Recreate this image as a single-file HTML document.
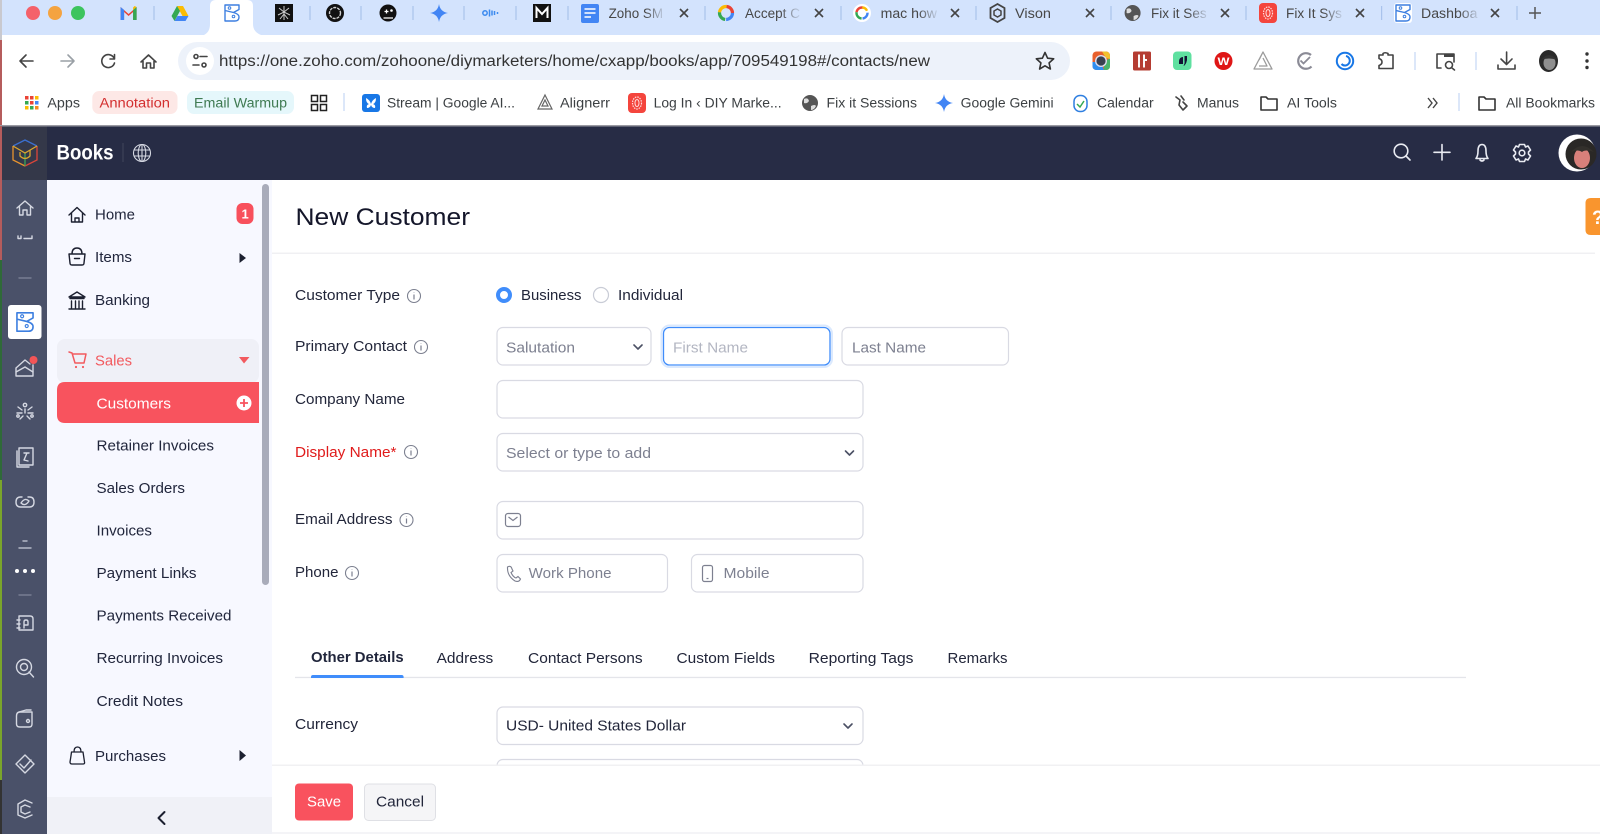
<!DOCTYPE html>
<html lang="en"><head><meta charset="utf-8"><title>New Customer</title>
<style>
html,body{margin:0;padding:0;background:#fff;width:1600px;height:834px;overflow:hidden}
svg{display:block;position:absolute;left:0;top:0}
text{font-family:"Liberation Sans",sans-serif;font-size:15px;fill:#21263c}
.t{font-size:13.5px;fill:#474747}.b{font-size:13.5px;fill:#3c4043}
.s{font-size:15px;fill:#21263c}.f{font-size:14.5px;fill:#22263a}.p{font-size:15px;fill:#7d8090}
.ic{fill:none;stroke:#444;stroke-width:1.6;stroke-linecap:round;stroke-linejoin:round}
.ra{fill:none;stroke:#d5d8e2;stroke-width:1.4;stroke-linecap:round;stroke-linejoin:round}
.sb{fill:none;stroke:#1c2030;stroke-width:1.4;stroke-linecap:round;stroke-linejoin:round}
.hd{fill:none;stroke:#e9ebf2;stroke-width:1.6;stroke-linecap:round;stroke-linejoin:round}
.bx{fill:#fff;stroke:#d9dae3;stroke-width:1.2}
</style></head><body>
<svg width="1600" height="834" viewBox="0 0 1600 834" xmlns="http://www.w3.org/2000/svg">
<defs>
<g id="i"><circle r="6.5" fill="none" stroke="#7c8090" stroke-width="1.1"/><path d="M0-1.5V3.5M0-3.6v.4" stroke="#7c8090" stroke-width="1.2" fill="none"/></g>
<g id="x"><path d="M-4-4L4 4M4-4L-4 4" stroke="#444" stroke-width="1.6" fill="none"/></g>
<path id="ch" d="M-4-2L0 2L4-2" fill="none" stroke="#4b5064" stroke-width="1.6" stroke-linecap="round" stroke-linejoin="round"/>
<linearGradient id="fd" x1="0" x2="1"><stop offset="0" stop-color="#d3e3fd" stop-opacity="0"/><stop offset="1" stop-color="#d3e3fd"/></linearGradient>
<g id="bk"><rect x="-9" y="-10" width="18" height="20" rx="3" fill="#fff"/><path d="M-7-8H7V-3.500L1.500-.5Q7 1 7 4Q7 8 3 8H-7ZM-7-2.500L1.500-.5" fill="none" stroke="#3d7fe0" stroke-width="1.400" stroke-linejoin="round"/><circle cx="-2.500" cy="-5" r="1.300" fill="none" stroke="#3d7fe0"/><circle cx="1.500" cy="3.500" r="1.300" fill="none" stroke="#3d7fe0"/></g>
<g id="gl"><circle r="8" fill="#555"/><path d="M-6-4Q-2-6-1-2Q-3 1-6 0ZM1 3Q5 1 6 3Q4 7 1 7Z" fill="#ddd"/></g>
<g id="rd"><rect x="-9" y="-10" width="18" height="20" rx="4" fill="#f4453d"/><ellipse rx="4.500" ry="6" fill="none" stroke="#fdd" stroke-width="1.200" stroke-dasharray="1.500 1"/><ellipse rx="2" ry="3.500" fill="none" stroke="#fdd" stroke-width="1"/></g>
<path id="sp" d="M0-9Q1.200-1.200 9 0Q1.200 1.200 0 9Q-1.200 1.200-9 0Q-1.200-1.200 0-9Z" fill="#4285f4"/>
<path id="fo" d="M-8-6H-3L-1-4H8V7H-8Z" fill="none" stroke="#333" stroke-width="1.600" stroke-linejoin="round"/>
</defs>

<!-- chrome -->
<rect width="1600" height="126" fill="#fff"/>
<rect width="1600" height="35" fill="#d3e3fd"/>
<rect x="0" y="0" width="2" height="60" fill="#c9c9cf"/>
<rect x="0" y="40" width="2" height="86" fill="#b55c5c"/>
<path d="M204 35Q210 32 210 24V6Q210 0 216 0H247Q253 0 253 6V24Q253 32 261 35Z" fill="#fff"/>
<circle cx="33" cy="13" r="7" fill="#f4616a"/><circle cx="55" cy="13" r="7" fill="#f4a340"/><circle cx="78" cy="13" r="7" fill="#3cc45e"/>
<!-- pinned tab icons -->
<g transform="translate(128.600 13)"><path d="M-8 7V-6L0 1L8-6V7H4.500V-1L0 3L-4.500-1V7Z" fill="#ea4335"/><path d="M-8 7V-6L-4.500-3V7Z" fill="#4285f4"/><path d="M8 7V-6L4.500-3V7Z" fill="#34a853"/><path d="M4.500-3L8-6L6-7L4.500-5.500Z" fill="#fbbc04"/></g>
<path d="M154 6V20M310 6V20M361 6V20M413 6V20M464 6V20M516 6V20M568 6V20M705 6V20M841 6V20M976 6V20M1111 6V20M1246 6V20M1381.600 6V20M1517 6V20" stroke="#a9c3ec" stroke-width="1.200"/>
<g transform="translate(180 13)"><path d="M-3-7H3L8.500 3H2.500Z" fill="#fbbc04"/><path d="M-3-7L-8.500 3L-5.500 8L0-2Z" fill="#34a853"/><path d="M-5.500 8H5.500L8.500 3H-2.500Z" fill="#4285f4"/></g>
<use href="#bk" x="232" y="13"/>
<rect x="275" y="4" width="18" height="18" fill="#111"/><path d="M279 8L284 12L289 8M278 15L284 12L290 15M284 6V20M280 19L284 14L288 19" stroke="#ccc" stroke-width="1" fill="none"/>
<circle cx="335" cy="13" r="9" fill="#111"/><circle cx="335" cy="13" r="5.500" fill="none" stroke="#d0d0d0" stroke-width="1.400" stroke-dasharray="3 1"/>
<circle cx="388" cy="13" r="8.500" fill="#111"/><circle cx="391.500" cy="10.500" r="1.300" fill="#fff"/><path d="M383.500 18H393M384.500 11.500h4M386.500 9.500v4" stroke="#fff" stroke-width="1.300"/>
<use href="#sp" transform="translate(439 13)"/>
<g transform="translate(491 13)" stroke="#3d8bef" stroke-width="1.500" fill="none"><circle cx="-6" r="2.200"/><path d="M-1.500-3.500V3.500M1-2.500V2.500M3.500-2V2M6.500-1V1"/></g>
<rect x="533" y="4" width="18" height="18" fill="#111"/><path d="M536.500 18V8L542 14L547.500 8V18" fill="none" stroke="#fff" stroke-width="2"/>
<rect x="581" y="4" width="18" height="19" rx="2" fill="#4285f4"/><path d="M584.500 9H595.500M584.500 13H595.500M584.500 17H591" stroke="#fff" stroke-width="1.600"/>
<text class="t" x="608.600" y="18" textLength="54.400" lengthAdjust="spacingAndGlyphs">Zoho SM</text><rect x="645" y="2" width="22" height="24" fill="url(#fd)"/><use href="#x" x="684" y="13"/>
<g transform="translate(726 13)" fill="none" stroke-width="3.200"><circle r="6.500" stroke="#4285f4" stroke-dasharray="10 31"/><circle r="6.500" stroke="#ea4335" stroke-dasharray="10 31" stroke-dashoffset="10"/><circle r="6.500" stroke="#fbbc04" stroke-dasharray="10 31" stroke-dashoffset="20"/><circle r="6.500" stroke="#34a853" stroke-dasharray="10 31" stroke-dashoffset="30"/></g>
<text class="t" x="745" y="18" textLength="55" lengthAdjust="spacingAndGlyphs">Accept C</text><rect x="780" y="2" width="22" height="24" fill="url(#fd)"/><use href="#x" x="819" y="13"/>
<circle cx="862" cy="13" r="9" fill="#fff"/><g transform="translate(862 13)" fill="none" stroke-width="2.400"><circle r="5.500" stroke="#4285f4" stroke-dasharray="9 26" stroke-dashoffset="1"/><circle r="5.500" stroke="#ea4335" stroke-dasharray="9 26" stroke-dashoffset="17"/><circle r="5.500" stroke="#fbbc04" stroke-dasharray="6 29" stroke-dashoffset="9"/><circle r="5.500" stroke="#34a853" stroke-dasharray="9 26" stroke-dashoffset="26"/></g>
<text class="t" x="880.600" y="18" textLength="56.400" lengthAdjust="spacingAndGlyphs">mac how</text><rect x="918" y="2" width="22" height="24" fill="url(#fd)"/><use href="#x" x="955" y="13"/>
<g transform="translate(997.500 13)" fill="none" stroke="#444" stroke-width="1.800"><path d="M0-9L7-5V5L0 9L-7 5V-5Z"/><path d="M0-4L3.500-2V2L0 4L-3.500 2V-2Z" stroke-width="1.500"/></g>
<text class="t" x="1015" y="18" textLength="36" lengthAdjust="spacingAndGlyphs">Vison</text><use href="#x" x="1090" y="13"/>
<use href="#gl" x="1132.600" y="13"/><text class="t" x="1151" y="18" textLength="55.600" lengthAdjust="spacingAndGlyphs">Fix it Ses</text><rect x="1188" y="2" width="22" height="24" fill="url(#fd)"/><use href="#x" x="1225" y="13"/>
<use href="#rd" x="1268" y="13"/><text class="t" x="1286" y="18" textLength="56" lengthAdjust="spacingAndGlyphs">Fix It Sys</text><rect x="1323" y="2" width="22" height="24" fill="url(#fd)"/><use href="#x" x="1360" y="13"/>
<use href="#bk" x="1403" y="13"/><text class="t" x="1421" y="18" textLength="56.500" lengthAdjust="spacingAndGlyphs">Dashboa</text><rect x="1459" y="2" width="22" height="24" fill="url(#fd)"/><use href="#x" x="1495" y="13"/>
<path d="M1529 13H1541M1535 7V19" stroke="#555" stroke-width="1.500"/>

<!-- toolbar -->
<g class="ic"><path d="M33 61H20M26 55L20 61L26 67"/><path d="M61 61H74M68 55L74 61L68 67" stroke="#9aa0a6"/><path d="M114 58A6.500 6.500 0 1 0 114.500 63M114.500 54.500V59H110"/><path d="M141 62L148.500 55L156 62M143 60V68H146.500V63H150.500V68H154V60"/></g>
<rect x="178" y="42" width="892" height="38" rx="19" fill="#edf2fa"/>
<circle cx="200" cy="61" r="14" fill="#fff"/>
<g class="ic" stroke-width="1.300"><circle cx="196" cy="56.500" r="2"/><path d="M200 56.500H207M193 65H199"/><circle cx="204" cy="65" r="2"/></g>
<text x="219" y="66" style="font-size:15.500px;fill:#333" textLength="711" lengthAdjust="spacingAndGlyphs">https://one.zoho.com/zohoone/diymarketers/home/cxapp/books/app/709549198#/contacts/new</text>
<path d="M1045 52.500L1047.600 58.200L1053.700 58.800L1049.100 62.900L1050.400 69L1045 65.800L1039.600 69L1040.900 62.900L1036.300 58.800L1042.400 58.200Z" fill="none" stroke="#333" stroke-width="1.600" stroke-linejoin="round"/>
<!-- extensions -->
<rect x="1092.500" y="51.500" width="17.500" height="18.500" rx="4" fill="#e8602c"/><path d="M1092.500 62V66Q1092.500 70 1097 70H1104L1101 62Z" fill="#2f8ef0"/><path d="M1104 70H1106Q1110 70 1110 66V58L1104 62Z" fill="#49b36a"/><path d="M1110 59V56Q1110 51.500 1105 51.500H1102L1106 58Z" fill="#f2c12e"/><circle cx="1101" cy="61" r="6" fill="#dde" /><circle cx="1101" cy="61" r="4.600" fill="#39404f"/>
<rect x="1133" y="51.500" width="18" height="19" rx="1.500" fill="#b53c32"/><path d="M1139 54.500V67.500M1144 54.500V67.500M1144 60H1147" stroke="#fff" stroke-width="1.900"/>
<rect x="1173" y="51.500" width="18.500" height="18.500" rx="4" fill="#5fe0a0"/><path d="M1179 62Q1179 57 1183 57V64H1179ZM1184.500 56H1187V60Q1186 65 1183.500 66Q1185 63 1184.500 61Z" fill="#113"/>
<circle cx="1223.500" cy="61" r="9" fill="#df1616"/><text x="1217.500" y="65" style="font-size:11px;font-weight:700;fill:#fff" textLength="12" lengthAdjust="spacingAndGlyphs">W</text>
<path d="M1263 52L1272 69H1254ZM1263 58L1267 66H1259M1263 52L1259 60" fill="none" stroke="#9b9b9b" stroke-width="1.300" stroke-linejoin="round"/>
<path d="M1311 55A7.800 7.800 0 1 0 1311.500 66.500" fill="none" stroke="#8b8b96" stroke-width="2.200"/><path d="M1300.500 60.500L1303.500 63.500L1310 57" fill="none" stroke="#8b8b96" stroke-width="1.800"/>
<circle cx="1345" cy="61" r="8.200" fill="none" stroke="#1877e6" stroke-width="2"/><path d="M1346 56A4.800 4.800 0 1 1 1341.500 64" fill="none" stroke="#1877e6" stroke-width="2"/>
<path class="ic" d="M1379 55H1383V53.500Q1385 52 1388 53.500V55H1393V68.500H1379V65.500Q1382 64.500 1382 62Q1382 59.500 1379 58.500Z"/>
<path d="M1415 52V70M1476 52V70" stroke="#c4d7f5" stroke-width="1.200"/>
<g class="ic"><path d="M1441 68H1437V54H1454V62"/><circle cx="1449" cy="65" r="3.500"/><path d="M1452 68L1454.500 70"/><rect x="1444" y="54" width="10" height="3" fill="#444" stroke="none"/></g>
<g class="ic" stroke="#333"><path d="M1506.600 52V64M1501 59L1506.600 64.500L1512 59M1498 65V69H1515V65"/></g>
<ellipse cx="1548.500" cy="61" rx="9.500" ry="11" fill="#2a2a2a"/><ellipse cx="1549.500" cy="63" rx="6" ry="7" fill="#8f8f8f"/><path d="M1541 60Q1549 50 1557 60Q1549 57 1541 60Z" fill="#333"/>
<circle cx="1587" cy="54" r="1.700" fill="#333"/><circle cx="1587" cy="61" r="1.700" fill="#333"/><circle cx="1587" cy="67.500" r="1.700" fill="#333"/>

<!-- bookmarks -->
<g><g fill="#ea4335"><rect x="25" y="96" width="3.500" height="3.500"/><rect x="30" y="96" width="3.500" height="3.500"/></g><rect x="35" y="96" width="3.500" height="3.500" fill="#fbbc04"/><rect x="25" y="101" width="3.500" height="3.500" fill="#34a853"/><rect x="30" y="101" width="3.500" height="3.500" fill="#ea4335"/><rect x="35" y="101" width="3.500" height="3.500" fill="#4285f4"/><rect x="25" y="106" width="3.500" height="3.500" fill="#fbbc04"/><rect x="30" y="106" width="3.500" height="3.500" fill="#34a853"/><rect x="35" y="106" width="3.500" height="3.500" fill="#f58a1f"/></g>
<text class="b" x="47.400" y="107.500" textLength="32.600" lengthAdjust="spacingAndGlyphs">Apps</text>
<rect x="92.300" y="91" width="85.200" height="23" rx="7" fill="#fde8e6"/><text x="99.500" y="107.500" style="font-size:13.500px;fill:#d32f2f" textLength="70.500" lengthAdjust="spacingAndGlyphs">Annotation</text>
<rect x="187" y="91" width="107" height="23" rx="7" fill="#e5f7fb"/><text x="194" y="107.500" style="font-size:13.500px;fill:#3f7a52" textLength="93" lengthAdjust="spacingAndGlyphs">Email Warmup</text>
<g fill="none" stroke="#222" stroke-width="1.500"><rect x="311.500" y="95.500" width="6" height="6"/><rect x="320.500" y="95.500" width="6" height="6"/><rect x="311.500" y="104.500" width="6" height="6"/><rect x="320.500" y="104.500" width="6" height="6"/></g>
<path d="M344 93V111" stroke="#c4d7f5" stroke-width="1.200"/>
<rect x="362" y="94" width="18" height="18" rx="3" fill="#1877e6"/><path d="M366 98Q370 100 371 104Q372 100 376 98Q376 103 373 104Q376 105 375 108Q372 108 371 105Q370 108 367 108Q366 105 369 104Q366 103 366 98Z" fill="#fff"/>
<text class="b" x="387" y="107.500" textLength="128" lengthAdjust="spacingAndGlyphs">Stream | Google AI...</text>
<path d="M545 95L552 109H538ZM545 100L548 106H542Z" fill="none" stroke="#666" stroke-width="1.200"/>
<text class="b" x="560" y="107.500" textLength="50" lengthAdjust="spacingAndGlyphs">Alignerr</text>
<use href="#rd" x="637" y="103"/><text class="b" x="653.600" y="107.500" textLength="128" lengthAdjust="spacingAndGlyphs">Log In ‹ DIY Marke...</text>
<use href="#gl" x="810" y="103"/><text class="b" x="826.500" y="107.500" textLength="90.500" lengthAdjust="spacingAndGlyphs">Fix it Sessions</text>
<use href="#sp" transform="translate(944 103)"/><text class="b" x="960.700" y="107.500" textLength="92.900" lengthAdjust="spacingAndGlyphs">Google Gemini</text>
<rect x="1074" y="95.500" width="13" height="16" rx="6" fill="none" stroke="#2f7fe0" stroke-width="1.500"/><path d="M1077 104L1080 107L1084 101" fill="none" stroke="#34a853" stroke-width="1.500"/>
<text class="b" x="1097" y="107.500" textLength="56.600" lengthAdjust="spacingAndGlyphs">Calendar</text>
<path class="ic" stroke-width="1.200" d="M1176 97L1180 100L1179 105L1183 110L1187 106L1183 102M1181 96L1184 100"/>
<text class="b" x="1197" y="107.500" textLength="42" lengthAdjust="spacingAndGlyphs">Manus</text>
<use href="#fo" x="1269" y="103"/><text class="b" x="1287" y="107.500" textLength="50" lengthAdjust="spacingAndGlyphs">AI Tools</text>
<path d="M1428 98L1432 103L1428 108M1433 98L1437 103L1433 108" fill="none" stroke="#444" stroke-width="1.400"/>
<path d="M1459 93V111" stroke="#c4d7f5" stroke-width="1.200"/>
<use href="#fo" x="1487" y="103"/><text class="b" x="1506" y="107.500" textLength="89" lengthAdjust="spacingAndGlyphs">All Bookmarks</text>
<rect y="125" width="1600" height="1.500" fill="#9a9aa2"/>

<!-- left desktop strip -->
<rect x="0" y="126" width="2" height="134" fill="#b55c5c"/><rect x="0" y="260" width="2" height="220" fill="#2f6a38"/><rect x="0" y="480" width="2" height="300" fill="#7aa52a"/><rect x="0" y="780" width="2" height="54" fill="#333"/>

<!-- app header -->
<rect x="47" y="126.500" width="1553" height="53.500" fill="#272c45"/>
<rect x="2" y="126.500" width="45" height="53.500" fill="#343849"/>
<g fill="none" stroke-width="1.300"><path d="M13 146L25 140L37 146" stroke="#3b6fd0"/><path d="M13 146V160L25 166" stroke="#e8932e"/><path d="M37 146V160L25 166" stroke="#d9453a"/><path d="M25 166V153" stroke="#3aa657"/><path d="M13 146L25 153L37 146" stroke="#d9a62e"/><path d="M20 152V156Q25 161 30 156V150" stroke="#d9a62e"/></g>
<text x="56.500" y="159.500" style="font-size:21px;font-weight:700;fill:#fff" textLength="57" lengthAdjust="spacingAndGlyphs">Books</text>
<path d="M123 143V162" stroke="#3d4258" stroke-width="1.200"/>
<g fill="none" stroke="#d5d8e2" stroke-width="1.100"><circle cx="142" cy="153" r="8.500"/><ellipse cx="142" cy="153" rx="3.800" ry="8.500"/><path d="M142 144.500V161.500M134 150H150M134 156H150"/></g>
<g class="hd"><circle cx="1401" cy="151" r="6.800"/><path d="M1406 156L1410 160"/><path d="M1442 144.500V160M1434 152.300H1450"/><path d="M1476 158.500Q1478 156 1478 151Q1478 144.500 1482 144.500Q1486 144.500 1486 151Q1486 156 1488 158.500ZM1480 160Q1482 162 1484 160"/><circle cx="1522" cy="153" r="2.800"/><path d="M1519.500 144.500H1524.500L1525.500 147L1528 146L1530.500 150L1528.500 152V154L1530.500 156L1528 160L1525.500 159L1524.500 161.500H1519.500L1518.500 159L1516 160L1513.500 156L1515.500 154V152L1513.500 150L1516 146L1518.500 147Z"/></g>
<circle cx="1577" cy="153" r="18.500" fill="#fff"/><circle cx="1581" cy="154" r="15.500" fill="#2a2826"/><ellipse cx="1582" cy="158" rx="8" ry="10" fill="#d8807a"/><path d="M1571 152Q1582 140 1594 152Q1585 149 1582 152Q1578 149 1571 152Z" fill="#33302c"/>

<!-- rail -->
<rect x="2" y="180" width="45" height="654" fill="#4a5169"/>
<g class="ra">
<path d="M17 208L25 201L33 208M19.500 206.500V215H23V210H27V215H30.500V206.500"/>
<path d="M18 236V238.500H21V236M24 238.500H32V236"/>
<path d="M19 278H31" stroke="#777d92"/>
</g>
<rect x="8" y="305" width="33.500" height="34" rx="3" fill="#fff"/>
<use href="#bk" transform="translate(25 322) scale(1.150)"/>
<g class="ra">
<path d="M16 368L25 360L30 364M16 368V376H33V365"/><path d="M16 372L25 367L33 372"/>
<circle cx="25" cy="405" r="1.700"/><path d="M18 407L22 410M32 407L28 410M17 413H22M28 413H33M25 409V413M20 419L23 416M30 419L27 416"/><circle cx="18" cy="416" r="1.200"/><circle cx="32" cy="416" r="1.200"/>
<rect x="19" y="448" width="14" height="17"/><path d="M17 451V467H29M24 453H29M27 453L24 460L28 461"/>
<path d="M22 497H20.500Q16 497 16 502Q16 507 20.500 507H28M28 497H29.500Q34 497 34 502Q34 507 29.500 507H28M21 503Q25 497 29 501Q25 507 21 503Z"/>
<path d="M23 541H27M19 548H31" stroke="#b5b9c8"/>
<path d="M19 595H31" stroke="#777d92"/>
<path d="M19 616H30Q33 616 33 619V630H19ZM17 620H20M17 624H20M17 628H20M24 628V622Q24 620 26 620Q28 620 28 622V625H24"/>
<circle cx="24" cy="667" r="7.500"/><circle cx="24" cy="667" r="3.500"/><path d="M29 672L33.500 677"/>
<path d="M16.500 716Q16.500 712 20 712H32V724Q32 727 29 727H20Q16.500 727 16.500 724Z"/><path d="M19 712L26 710H31"/><circle cx="28" cy="721" r="1.500"/>
<path d="M25 755L34 764L25 773L16 764Z"/><path d="M20 764L24 768L31 760"/>
<path d="M32 803L25 800L18 804V815L25 818L32 815"/><path d="M30 807L25 805L21 807V812L25 814L30 812"/>
</g>
<circle cx="33.500" cy="360" r="4" fill="#f25557"/>
<circle cx="17" cy="571" r="2" fill="#fff"/><circle cx="25" cy="571" r="2" fill="#fff"/><circle cx="33" cy="571" r="2" fill="#fff"/>

<!-- sidebar -->
<rect x="47" y="180" width="225" height="654" fill="#f7f8ff"/>
<rect x="47" y="797" width="225" height="37" fill="#f0f1f7"/>
<rect x="262" y="184" width="7" height="401" rx="3.500" fill="#a9acba"/>
<rect x="57" y="339" width="202" height="44" rx="8" fill="#eff0f7"/>
<path d="M65 382H259V423H65Q57 423 57 415V390Q57 382 65 382Z" fill="#f8535e"/>
<g class="sb">
<path d="M69 215L77 207.500L85 215M71.500 213V222H82.500V213M75 222V218H79V222"/>
<path d="M72 254Q72 248 77 248Q82 248 82 254M69 254H85L84 263Q84 265 82 265H72Q70 265 70 263ZM74.500 258.500H79.500"/>
<path d="M69 297L77 292L85 297ZM70 298.500H84M71.500 301V308M75.500 301V308M79 301V308M82.500 301V308M69 309H85"/>
<path d="M71.500 752Q71 756 70 762Q70 764 72 764H83Q85 764 84.500 762L83 752ZM74 752Q74 747 77.500 747Q81 747 81 752" stroke-width="1.300"/>
<path d="M164.500 812L158.500 818L164.500 824" stroke-width="2"/>
</g>
<g fill="none" stroke="#f25a5f" stroke-width="1.500" stroke-linecap="round" stroke-linejoin="round"><path d="M69 352L72 353L75 363H84L86 354H73"/></g><circle cx="76" cy="367" r="1.100" fill="#f25a5f"/><circle cx="83" cy="367" r="1.100" fill="#f25a5f"/>
<rect x="236.500" y="203" width="17" height="21" rx="6" fill="#f8505c"/><text x="241.500" y="218.500" style="font-size:13px;font-weight:700;fill:#fff">1</text>
<path d="M239.500 253L246 258L239.500 263Z" fill="#1c2030"/><path d="M239.500 750L246 755.500L239.500 761Z" fill="#1c2030"/>
<path d="M239 357H249.500L244 363.500Z" fill="#f25a5f"/>
<circle cx="244" cy="403" r="7.500" fill="#fff"/><path d="M240 403H248M244 399V407" stroke="#f8535e" stroke-width="1.800"/>
<text class="s" x="95" y="219.500" textLength="40" lengthAdjust="spacingAndGlyphs">Home</text>
<text class="s" x="95" y="262" textLength="37" lengthAdjust="spacingAndGlyphs">Items</text>
<text class="s" x="95" y="305" textLength="55" lengthAdjust="spacingAndGlyphs">Banking</text>
<text class="s" x="95" y="365.500" textLength="37" lengthAdjust="spacingAndGlyphs" style="fill:#f25a5f">Sales</text>
<text class="s" x="96.500" y="408.500" textLength="74.500" lengthAdjust="spacingAndGlyphs" style="fill:#fff;font-weight:500">Customers</text>
<text class="s" x="96.500" y="450.500" textLength="117.500" lengthAdjust="spacingAndGlyphs">Retainer Invoices</text>
<text class="s" x="96.500" y="493" textLength="88.500" lengthAdjust="spacingAndGlyphs">Sales Orders</text>
<text class="s" x="96.500" y="535.500" textLength="55.500" lengthAdjust="spacingAndGlyphs">Invoices</text>
<text class="s" x="96.500" y="578" textLength="100" lengthAdjust="spacingAndGlyphs">Payment Links</text>
<text class="s" x="96.500" y="620.500" textLength="135" lengthAdjust="spacingAndGlyphs">Payments Received</text>
<text class="s" x="96.500" y="663" textLength="126.500" lengthAdjust="spacingAndGlyphs">Recurring Invoices</text>
<text class="s" x="96.500" y="706" textLength="86.500" lengthAdjust="spacingAndGlyphs">Credit Notes</text>
<text class="s" x="95" y="761" textLength="71" lengthAdjust="spacingAndGlyphs">Purchases</text>

<!-- form -->
<text x="295.500" y="225" style="font-size:24.500px;fill:#14162a" textLength="174.500" lengthAdjust="spacingAndGlyphs">New Customer</text>
<rect x="272" y="252.500" width="1323" height="1.500" fill="#f0f0f3"/>
<path d="M1600 198H1591Q1585.500 198 1585.500 203V230Q1585.500 235 1591 235H1600Z" fill="#f9952e"/><text x="1592" y="224" style="font-size:19px;font-weight:700;fill:#fff">?</text>

<text class="f" x="295" y="300" textLength="105" lengthAdjust="spacingAndGlyphs">Customer Type</text><use href="#i" x="414" y="296"/>
<circle cx="504" cy="295" r="6" fill="#fff" stroke="#408dfb" stroke-width="4"/>
<text class="f" x="521" y="300" textLength="60.500" lengthAdjust="spacingAndGlyphs">Business</text>
<circle cx="601" cy="295" r="7.500" fill="#fff" stroke="#c9ccd6" stroke-width="1.200"/>
<text class="f" x="618" y="300" textLength="65" lengthAdjust="spacingAndGlyphs">Individual</text>

<text class="f" x="295" y="351" textLength="112" lengthAdjust="spacingAndGlyphs">Primary Contact</text><use href="#i" x="421" y="347"/>
<rect class="bx" x="497" y="327.500" width="154" height="37.500" rx="6"/>
<text class="p" x="506" y="352.500" textLength="69" lengthAdjust="spacingAndGlyphs">Salutation</text><use href="#ch" x="638" y="347"/>
<rect x="663.500" y="327.500" width="166.500" height="37.500" rx="6" fill="#fff" stroke="#408dfb" stroke-width="1.300"/><rect x="661.500" y="325.500" width="170.500" height="41.500" rx="8" fill="none" stroke="#dbe9fd" stroke-width="2"/>
<text class="p" x="673" y="352.500" textLength="75" lengthAdjust="spacingAndGlyphs" style="fill:#b3b6c2">First Name</text>
<rect class="bx" x="842" y="327.500" width="166.500" height="37.500" rx="6"/>
<text class="p" x="852" y="352.500" textLength="74" lengthAdjust="spacingAndGlyphs">Last Name</text>

<text class="f" x="295" y="404" textLength="110" lengthAdjust="spacingAndGlyphs">Company Name</text>
<rect class="bx" x="497" y="380.500" width="366" height="37.500" rx="6"/>

<text class="f" x="295" y="457" textLength="101.500" lengthAdjust="spacingAndGlyphs" style="fill:#e01b1b">Display Name*</text><use href="#i" x="411" y="452"/>
<rect class="bx" x="497" y="433.500" width="366" height="37.500" rx="6"/>
<text class="p" x="506" y="458" textLength="145" lengthAdjust="spacingAndGlyphs">Select or type to add</text><use href="#ch" x="849.500" y="453"/>

<text class="f" x="295" y="524" textLength="97.500" lengthAdjust="spacingAndGlyphs">Email Address</text><use href="#i" x="406.500" y="520"/>
<rect class="bx" x="497" y="501.500" width="366" height="37.500" rx="6"/>
<g fill="none" stroke="#7d8090" stroke-width="1.200"><rect x="505.500" y="513.500" width="15" height="13" rx="2.500"/><path d="M508.500 517L513 520.500L517.500 517"/></g>

<text class="f" x="295" y="577" textLength="43.500" lengthAdjust="spacingAndGlyphs">Phone</text><use href="#i" x="352" y="573"/>
<rect class="bx" x="497" y="554.500" width="170.500" height="37.500" rx="6"/>
<path d="M507.500 567Q511 565 512 569L513 571L511 572.500Q513 577 516 578L518 576.500L520.500 579Q519 582.500 515 581Q507 576 507.500 567Z" fill="none" stroke="#7d8090" stroke-width="1.100"/>
<text class="p" x="528.700" y="578" textLength="82.800" lengthAdjust="spacingAndGlyphs">Work Phone</text>
<rect class="bx" x="691.500" y="554.500" width="171.500" height="37.500" rx="6"/>
<rect x="702.500" y="565.500" width="10" height="16" rx="2" fill="none" stroke="#7d8090" stroke-width="1.200"/><path d="M706.500 578.500h2" stroke="#7d8090" stroke-width="1.200"/>
<text class="p" x="723.500" y="578" textLength="46" lengthAdjust="spacingAndGlyphs">Mobile</text>

<rect x="295" y="676.800" width="1171" height="1.300" fill="#e4e5ea"/>
<path d="M311 678V677Q311 675 313 675H401.600Q403.600 675 403.600 677V678Z" fill="#408dfb"/>
<text class="f" x="311" y="662" textLength="92.600" lengthAdjust="spacingAndGlyphs" style="font-weight:700;fill:#21263c">Other Details</text>
<text class="f" x="436.600" y="663" textLength="56.700" lengthAdjust="spacingAndGlyphs">Address</text>
<text class="f" x="528" y="663" textLength="114.600" lengthAdjust="spacingAndGlyphs">Contact Persons</text>
<text class="f" x="676.500" y="663" textLength="98.500" lengthAdjust="spacingAndGlyphs">Custom Fields</text>
<text class="f" x="808.600" y="663" textLength="104.900" lengthAdjust="spacingAndGlyphs">Reporting Tags</text>
<text class="f" x="947.500" y="663" textLength="60" lengthAdjust="spacingAndGlyphs">Remarks</text>

<text class="f" x="295" y="729" textLength="63" lengthAdjust="spacingAndGlyphs">Currency</text>
<rect class="bx" x="497" y="707" width="366" height="37.500" rx="6"/>
<text class="f" x="506" y="730.500" textLength="180" lengthAdjust="spacingAndGlyphs" style="font-size:15px">USD- United States Dollar</text><use href="#ch" x="848" y="726"/>
<rect class="bx" x="497" y="759.500" width="366" height="30" rx="6"/>

<!-- footer -->
<rect x="272" y="764.500" width="1328" height="1.500" fill="#f1f1f3"/>
<rect x="272" y="766" width="1328" height="66" fill="#fff"/>
<rect x="272" y="832" width="1328" height="2" fill="#f4f4f7"/>
<rect x="295" y="783.500" width="58" height="37" rx="4" fill="#f9525e"/>
<text x="307" y="806.500" style="font-size:15px;fill:#fff" textLength="34" lengthAdjust="spacingAndGlyphs">Save</text>
<rect x="364.500" y="784" width="71" height="36.500" rx="4" fill="#f5f5f7" stroke="#dfe0e5"/>
<text class="f" x="376" y="806.500" textLength="48" lengthAdjust="spacingAndGlyphs" style="font-size:15px">Cancel</text>
</svg>
</body></html>
